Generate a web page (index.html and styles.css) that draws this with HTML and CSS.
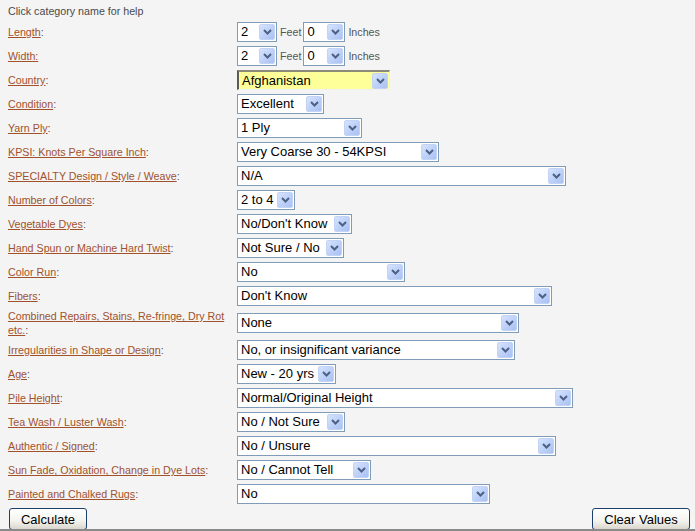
FILE: index.html
```html
<!DOCTYPE html>
<html>
<head>
<meta charset="utf-8">
<link rel="stylesheet" href="styles.css">
</head>
<body>
<div class="page">
  <div class="hint">Click category name for help</div>
  <div class="form">
    <div class="lbl"><a>Length</a>:</div>
    <div class="ctl"><span class="sel w40"><span class="val">2</span><span class="btn"><svg width="9" height="6" viewBox="0 0 9 6"><path d="M1 1 L4.5 4.5 L8 1" fill="none" stroke="#4d6185" stroke-width="2"/></svg></span></span><span class="unit">Feet</span><span class="sel w42"><span class="val">0</span><span class="btn"><svg width="9" height="6" viewBox="0 0 9 6"><path d="M1 1 L4.5 4.5 L8 1" fill="none" stroke="#4d6185" stroke-width="2"/></svg></span></span><span class="unit">Inches</span></div>

    <div class="lbl"><a>Width:</a></div>
    <div class="ctl"><span class="sel w40"><span class="val">2</span><span class="btn"><svg width="9" height="6" viewBox="0 0 9 6"><path d="M1 1 L4.5 4.5 L8 1" fill="none" stroke="#4d6185" stroke-width="2"/></svg></span></span><span class="unit">Feet</span><span class="sel w42"><span class="val">0</span><span class="btn"><svg width="9" height="6" viewBox="0 0 9 6"><path d="M1 1 L4.5 4.5 L8 1" fill="none" stroke="#4d6185" stroke-width="2"/></svg></span></span><span class="unit">Inches</span></div>

    <div class="lbl"><a>Country</a>:</div>
    <div class="ctl"><span class="sel hl" style="width:153px"><span class="val">Afghanistan</span><span class="btn"><svg width="9" height="6" viewBox="0 0 9 6"><path d="M1 1 L4.5 4.5 L8 1" fill="none" stroke="#4d6185" stroke-width="2"/></svg></span></span></div>

    <div class="lbl"><a>Condition</a>:</div>
    <div class="ctl"><span class="sel" style="width:87px"><span class="val">Excellent</span><span class="btn"><svg width="9" height="6" viewBox="0 0 9 6"><path d="M1 1 L4.5 4.5 L8 1" fill="none" stroke="#4d6185" stroke-width="2"/></svg></span></span></div>

    <div class="lbl"><a>Yarn Ply</a>:</div>
    <div class="ctl"><span class="sel" style="width:125px"><span class="val">1 Ply</span><span class="btn"><svg width="9" height="6" viewBox="0 0 9 6"><path d="M1 1 L4.5 4.5 L8 1" fill="none" stroke="#4d6185" stroke-width="2"/></svg></span></span></div>

    <div class="lbl"><a>KPSI: Knots Per Square Inch</a>:</div>
    <div class="ctl"><span class="sel" style="width:202px"><span class="val">Very Coarse 30 - 54KPSI</span><span class="btn"><svg width="9" height="6" viewBox="0 0 9 6"><path d="M1 1 L4.5 4.5 L8 1" fill="none" stroke="#4d6185" stroke-width="2"/></svg></span></span></div>

    <div class="lbl"><a>SPECIALTY Design / Style / Weave</a>:</div>
    <div class="ctl"><span class="sel" style="width:329px"><span class="val">N/A</span><span class="btn"><svg width="9" height="6" viewBox="0 0 9 6"><path d="M1 1 L4.5 4.5 L8 1" fill="none" stroke="#4d6185" stroke-width="2"/></svg></span></span></div>

    <div class="lbl"><a>Number of Colors</a>:</div>
    <div class="ctl"><span class="sel" style="width:58px"><span class="val">2 to 4</span><span class="btn"><svg width="9" height="6" viewBox="0 0 9 6"><path d="M1 1 L4.5 4.5 L8 1" fill="none" stroke="#4d6185" stroke-width="2"/></svg></span></span></div>

    <div class="lbl"><a>Vegetable Dyes</a>:</div>
    <div class="ctl"><span class="sel" style="width:115px"><span class="val">No/Don't Know</span><span class="btn"><svg width="9" height="6" viewBox="0 0 9 6"><path d="M1 1 L4.5 4.5 L8 1" fill="none" stroke="#4d6185" stroke-width="2"/></svg></span></span></div>

    <div class="lbl"><a>Hand Spun or Machine Hard Twist</a>:</div>
    <div class="ctl"><span class="sel" style="width:107px"><span class="val">Not Sure / No</span><span class="btn"><svg width="9" height="6" viewBox="0 0 9 6"><path d="M1 1 L4.5 4.5 L8 1" fill="none" stroke="#4d6185" stroke-width="2"/></svg></span></span></div>

    <div class="lbl"><a>Color Run</a>:</div>
    <div class="ctl"><span class="sel" style="width:168px"><span class="val">No</span><span class="btn"><svg width="9" height="6" viewBox="0 0 9 6"><path d="M1 1 L4.5 4.5 L8 1" fill="none" stroke="#4d6185" stroke-width="2"/></svg></span></span></div>

    <div class="lbl"><a>Fibers</a>:</div>
    <div class="ctl"><span class="sel" style="width:315px"><span class="val">Don't Know</span><span class="btn"><svg width="9" height="6" viewBox="0 0 9 6"><path d="M1 1 L4.5 4.5 L8 1" fill="none" stroke="#4d6185" stroke-width="2"/></svg></span></span></div>

    <div class="lbl"><a>Combined Repairs, Stains, Re-fringe, Dry Rot</a><br><a>etc.</a>:</div>
    <div class="ctl"><span class="sel" style="width:282px"><span class="val">None</span><span class="btn"><svg width="9" height="6" viewBox="0 0 9 6"><path d="M1 1 L4.5 4.5 L8 1" fill="none" stroke="#4d6185" stroke-width="2"/></svg></span></span></div>

    <div class="lbl"><a>Irregularities in Shape or Design</a>:</div>
    <div class="ctl"><span class="sel" style="width:278px"><span class="val">No, or insignificant variance</span><span class="btn"><svg width="9" height="6" viewBox="0 0 9 6"><path d="M1 1 L4.5 4.5 L8 1" fill="none" stroke="#4d6185" stroke-width="2"/></svg></span></span></div>

    <div class="lbl"><a>Age</a>:</div>
    <div class="ctl"><span class="sel" style="width:99px"><span class="val">New - 20 yrs</span><span class="btn"><svg width="9" height="6" viewBox="0 0 9 6"><path d="M1 1 L4.5 4.5 L8 1" fill="none" stroke="#4d6185" stroke-width="2"/></svg></span></span></div>

    <div class="lbl"><a>Pile Height</a>:</div>
    <div class="ctl"><span class="sel" style="width:336px"><span class="val">Normal/Original Height</span><span class="btn"><svg width="9" height="6" viewBox="0 0 9 6"><path d="M1 1 L4.5 4.5 L8 1" fill="none" stroke="#4d6185" stroke-width="2"/></svg></span></span></div>

    <div class="lbl"><a>Tea Wash / Luster Wash</a>:</div>
    <div class="ctl"><span class="sel" style="width:108px"><span class="val">No / Not Sure</span><span class="btn"><svg width="9" height="6" viewBox="0 0 9 6"><path d="M1 1 L4.5 4.5 L8 1" fill="none" stroke="#4d6185" stroke-width="2"/></svg></span></span></div>

    <div class="lbl"><a>Authentic / Signed</a>:</div>
    <div class="ctl"><span class="sel" style="width:319px"><span class="val">No / Unsure</span><span class="btn"><svg width="9" height="6" viewBox="0 0 9 6"><path d="M1 1 L4.5 4.5 L8 1" fill="none" stroke="#4d6185" stroke-width="2"/></svg></span></span></div>

    <div class="lbl"><a>Sun Fade, Oxidation, Change in Dye Lots</a>:</div>
    <div class="ctl"><span class="sel" style="width:134px"><span class="val">No / Cannot Tell</span><span class="btn"><svg width="9" height="6" viewBox="0 0 9 6"><path d="M1 1 L4.5 4.5 L8 1" fill="none" stroke="#4d6185" stroke-width="2"/></svg></span></span></div>

    <div class="lbl"><a>Painted and Chalked Rugs</a>:</div>
    <div class="ctl"><span class="sel" style="width:253px"><span class="val">No</span><span class="btn"><svg width="9" height="6" viewBox="0 0 9 6"><path d="M1 1 L4.5 4.5 L8 1" fill="none" stroke="#4d6185" stroke-width="2"/></svg></span></span></div>
  </div>
  <div class="actions">
    <button class="xpbtn calc">Calculate</button>
    <button class="xpbtn clear">Clear Values</button>
  </div>
</div>
<div class="frame-line"></div>
</body>
</html>
```

FILE: styles.css
```css
html, body {
  margin: 0;
  padding: 0;
  background: #f4f4f4;
}
body {
  font-family: "Liberation Sans", Arial, sans-serif;
  height: 531px;
  overflow: hidden;
  position: relative;
}
.page {
  padding: 4px 5px 0 8px;
}
.hint {
  font-size: 10.7px;
  line-height: 14px;
  color: #4a4a4a;
  margin-bottom: 4px;
}
.form {
  display: grid;
  grid-template-columns: 229px auto;
  row-gap: 4px;
  align-items: center;
}
.lbl {
  font-size: 10.7px;
  line-height: 14px;
  margin: -1px 0;
  color: #555;
  padding-right: 4px;
}
.lbl a {
  color: #a0522d;
  text-decoration: underline;
  text-underline-offset: 1px;
}
.ctl {
  display: flex;
  align-items: center;
  height: 20px;
}
.sel {
  box-sizing: border-box;
  height: 20px;
  display: inline-flex;
  align-items: center;
  justify-content: space-between;
  background: #fff;
  border: 1px solid #7f9db9;
  font-size: 13px;
  color: #000;
  padding: 0 1px 0 0;
}
.sel .val {
  padding-left: 3px;
  white-space: nowrap;
  line-height: 16px;
}
.sel.w40 { width: 40px; }
.sel.w42 { width: 42px; }
.sel.hl {
  background: #ffff99;
  border-top: 2px solid #8c8a78;
  border-left: 2px solid #5a5a4e;
  border-right: 1px solid #f0f0f0;
  border-bottom: 1px solid #f0f0f0;
}
.btn {
  box-sizing: border-box;
  width: 16px;
  height: 16px;
  display: inline-flex;
  align-items: center;
  justify-content: center;
  background: linear-gradient(135deg, #d6e3fd 0%, #bcd0f8 55%, #a9c1f2 100%);
  border: 1px solid #c3d3f5;
  border-radius: 2px;
}
.unit {
  font-size: 10.7px;
  color: #555;
  margin: 0 2px 0 3px;
}
.actions {
  display: flex;
  justify-content: space-between;
  margin-top: 4px;
  padding-left: 1px;
}
.xpbtn {
  box-sizing: border-box;
  height: 22px;
  font-family: "Liberation Sans", Arial, sans-serif;
  font-size: 13px;
  color: #000;
  border: 1px solid #1c3f6e;
  border-radius: 3px;
  background: linear-gradient(#ffffff 0%, #f3f3ee 60%, #d9d7cc 100%);
  padding: 0;
}
.calc { width: 78px; }
.clear { width: 98px; }
.frame-line {
  position: absolute;
  left: 0;
  right: 0;
  bottom: 0;
  height: 2px;
  background: #8a8a8a;
}
```
